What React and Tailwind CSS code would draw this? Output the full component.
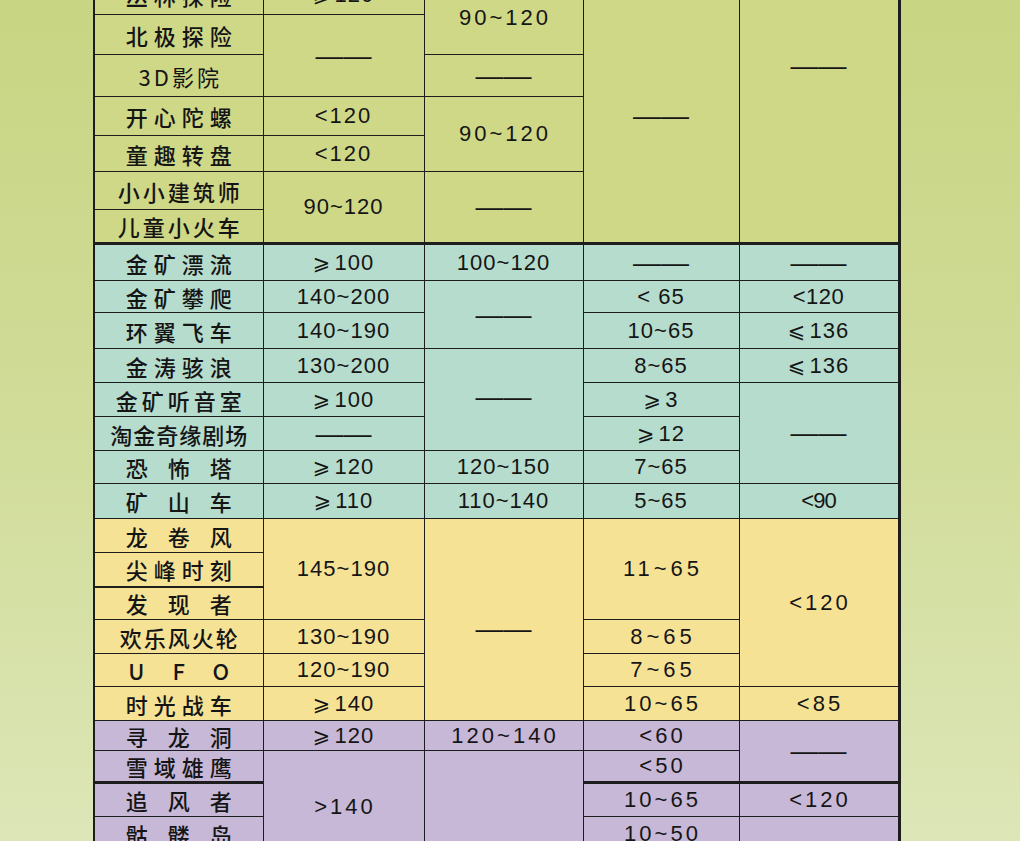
import React from "react";

// 项目限制表 (身高 / 年龄 / 体重) — colour bands per park area
const cell =
  "border-[1.5px] border-[#1d1d1d] p-0 text-center align-middle leading-none text-[#151515]";

const Num = ({ children, className = "", ...props }) => (
  <td
    {...props}
    className={`${cell} font-['Liberation_Sans',sans-serif] text-[22px] ${className}`}
  >
    {children}
  </td>
);

const Name = ({ children, className = "", ...props }) => (
  <td
    {...props}
    className={`${cell} border-l-2 font-['Noto_Sans_CJK_SC',sans-serif] text-[22px] font-medium whitespace-nowrap ${className}`}
  >
    {children}
  </td>
);

const Dash = () => (
  <span className="font-['Liberation_Sans',sans-serif] text-[28px] tracking-normal">——</span>
);

const Ge = () => (
  <span className="font-['DejaVu_Sans',sans-serif] text-[21px] mr-[3px]">⩾</span>
);

const Le = () => (
  <span className="font-['DejaVu_Sans',sans-serif] text-[21px] mr-[3px]">⩽</span>
);

const App = () => {
  return (
    <div className="h-[841px] w-[1020px] overflow-hidden bg-linear-to-b from-[#c8d582] via-[#d0dc98] to-[#dde6b7]">
      <table className="ml-[93px] -mt-[26px] w-[805px] table-fixed border-collapse">
        <colgroup>
          <col className="w-[169px]" />
          <col className="w-[161px]" />
          <col className="w-[159px]" />
          <col className="w-[156px]" />
          <col className="w-[160px]" />
        </colgroup>
        <tbody>
          {/* green band */}
          <tr className="h-[40px] bg-[#cfd887]">
            <Name className="tracking-[6px] pl-[6px]">丛林探险</Name>
            <Num className="tracking-[1px]"><Ge />120</Num>
            <Num rowSpan={2} className="tracking-[3px] pl-[3px] pt-[6px]">90~120</Num>
            <Num rowSpan={7} className="pt-[15px]"><Dash /></Num>
            <Num rowSpan={7} className="border-r-[3px] pb-[85px]"><Dash /></Num>
          </tr>
          <tr className="h-[40px] bg-[#cfd887]">
            <Name className="tracking-[6px] pl-[6px]">北极探险</Name>
            <Num rowSpan={2}><Dash /></Num>
          </tr>
          <tr className="h-[42px] bg-[#cfd887]">
            <Name className="tracking-[3px] pl-[3px] font-normal">3D影院</Name>
            <Num><Dash /></Num>
          </tr>
          <tr className="h-[39px] bg-[#cfd887]">
            <Name className="tracking-[6px] pl-[6px]">开心陀螺</Name>
            <Num className="tracking-[2px]">&lt;120</Num>
            <Num rowSpan={2} className="tracking-[3px] pl-[3px]">90~120</Num>
          </tr>
          <tr className="h-[36px] bg-[#cfd887]">
            <Name className="tracking-[6px] pl-[6px]">童趣转盘</Name>
            <Num className="tracking-[2px]">&lt;120</Num>
          </tr>
          <tr className="h-[38px] bg-[#cfd887]">
            <Name className="tracking-[3px] pl-[3px]">小小建筑师</Name>
            <Num rowSpan={2} className="tracking-[1px]">90~120</Num>
            <Num rowSpan={2}><Dash /></Num>
          </tr>
          <tr className="h-[34px] bg-[#cfd887]">
            <Name className="tracking-[3px] pl-[3px]">儿童小火车</Name>
          </tr>

          {/* teal band */}
          <tr className="h-[37px] bg-[#b5dccd]">
            <Name className="border-t-[3px] tracking-[6px] pl-[6px]">金矿漂流</Name>
            <Num className="border-t-[3px] tracking-[1px]"><Ge />100</Num>
            <Num className="border-t-[3px] tracking-[1px]">100~120</Num>
            <Num className="border-t-[3px]"><Dash /></Num>
            <Num className="border-t-[3px] border-r-[3px]"><Dash /></Num>
          </tr>
          <tr className="h-[32px] bg-[#b5dccd]">
            <Name className="tracking-[6px] pl-[6px]">金矿攀爬</Name>
            <Num className="tracking-[1px]">140~200</Num>
            <Num rowSpan={2}><Dash /></Num>
            <Num className="tracking-[1px]">&lt; 65</Num>
            <Num className="border-r-[3px] tracking-[0.5px]">&lt;120</Num>
          </tr>
          <tr className="h-[36px] bg-[#b5dccd]">
            <Name className="tracking-[6px] pl-[6px]">环翼飞车</Name>
            <Num className="tracking-[1px]">140~190</Num>
            <Num className="tracking-[1px]">10~65</Num>
            <Num className="border-r-[3px] tracking-[1px]"><Le />136</Num>
          </tr>
          <tr className="h-[34px] bg-[#b5dccd]">
            <Name className="tracking-[6px] pl-[6px]">金涛骇浪</Name>
            <Num className="tracking-[1px]">130~200</Num>
            <Num rowSpan={3} className="pb-[6px]"><Dash /></Num>
            <Num className="tracking-[1px]">8~65</Num>
            <Num className="border-r-[3px] tracking-[1px]"><Le />136</Num>
          </tr>
          <tr className="h-[34px] bg-[#b5dccd]">
            <Name className="tracking-[4px] pl-[4px]">金矿听音室</Name>
            <Num className="tracking-[1px]"><Ge />100</Num>
            <Num className="tracking-[1px]"><Ge />3</Num>
            <Num rowSpan={3} className="border-r-[3px]"><Dash /></Num>
          </tr>
          <tr className="h-[34px] bg-[#b5dccd]">
            <Name className="tracking-[1px] pl-[1px]">淘金奇缘剧场</Name>
            <Num><Dash /></Num>
            <Num className="tracking-[1px]"><Ge />12</Num>
          </tr>
          <tr className="h-[33px] bg-[#b5dccd]">
            <Name className="tracking-[20px] pl-[20px]">恐怖塔</Name>
            <Num className="tracking-[1px]"><Ge />120</Num>
            <Num className="tracking-[1px]">120~150</Num>
            <Num className="tracking-[1px]">7~65</Num>
          </tr>
          <tr className="h-[35px] bg-[#b5dccd]">
            <Name className="tracking-[20px] pl-[20px]">矿山车</Name>
            <Num className="tracking-[1px]"><Ge />110</Num>
            <Num className="tracking-[1px]">110~140</Num>
            <Num className="tracking-[1px]">5~65</Num>
            <Num className="border-r-[3px] tracking-[-1px]">&lt;90</Num>
          </tr>

          {/* yellow band */}
          <tr className="h-[34px] bg-[#f6e295]">
            <Name className="tracking-[20px] pl-[20px]">龙卷风</Name>
            <Num rowSpan={3} className="tracking-[1px]">145~190</Num>
            <Num rowSpan={6} className="pt-[18px]"><Dash /></Num>
            <Num rowSpan={3} className="tracking-[4px] pl-[4px]">11~65</Num>
            <Num rowSpan={5} className="border-r-[3px] tracking-[3px] pl-[3px]">&lt;120</Num>
          </tr>
          <tr className="h-[34px] bg-[#f6e295]">
            <Name className="tracking-[6px] pl-[6px]">尖峰时刻</Name>
          </tr>
          <tr className="h-[33px] bg-[#f6e295]">
            <Name className="border-t-2 tracking-[20px] pl-[20px]">发现者</Name>
          </tr>
          <tr className="h-[34px] bg-[#f6e295]">
            <Name className="tracking-[2px] pl-[2px]">欢乐风火轮</Name>
            <Num className="tracking-[1px]">130~190</Num>
            <Num className="tracking-[4px] pl-[4px]">8~65</Num>
          </tr>
          <tr className="h-[33px] bg-[#f6e295]">
            <Name className="font-['Liberation_Sans',sans-serif] font-bold tracking-[28px] pl-[28px]">UFO</Name>
            <Num className="tracking-[1px]">120~190</Num>
            <Num className="tracking-[4px] pl-[4px]">7~65</Num>
          </tr>
          <tr className="h-[34px] bg-[#f6e295]">
            <Name className="tracking-[6px] pl-[6px]">时光战车</Name>
            <Num className="tracking-[1px]"><Ge />140</Num>
            <Num className="tracking-[3px] pl-[3px]">10~65</Num>
            <Num className="border-r-[3px] tracking-[3px] pl-[3px]">&lt;85</Num>
          </tr>

          {/* purple band */}
          <tr className="h-[30px] bg-[#c6b8d6]">
            <Name className="tracking-[20px] pl-[20px]">寻龙洞</Name>
            <Num className="tracking-[1px]"><Ge />120</Num>
            <Num className="tracking-[3px] pl-[3px]">120~140</Num>
            <Num className="tracking-[3px] pl-[3px]">&lt;60</Num>
            <Num rowSpan={2} className="border-r-[3px]"><Dash /></Num>
          </tr>
          <tr className="h-[32px] bg-[#c6b8d6]">
            <Name className="tracking-[6px] pl-[6px]">雪域雄鹰</Name>
            <Num rowSpan={3} className="tracking-[3px] pl-[3px] pt-[12px]">&gt;140</Num>
            <Num rowSpan={3}></Num>
            <Num className="tracking-[3px] pl-[3px]">&lt;50</Num>
          </tr>
          <tr className="h-[34px] bg-[#c6b8d6]">
            <Name className="border-t-[3px] tracking-[20px] pl-[20px]">追风者</Name>
            <Num className="border-t-[3px] tracking-[3px] pl-[3px]">10~65</Num>
            <Num className="border-t-[3px] border-r-[3px] tracking-[3px] pl-[3px]">&lt;120</Num>
          </tr>
          <tr className="h-[34px] bg-[#c6b8d6]">
            <Name className="tracking-[20px] pl-[20px]">骷髅岛</Name>
            <Num className="tracking-[3px] pl-[3px]">10~50</Num>
            <Num className="border-r-[3px]"></Num>
          </tr>
        </tbody>
      </table>
    </div>
  );
};

export default App;
